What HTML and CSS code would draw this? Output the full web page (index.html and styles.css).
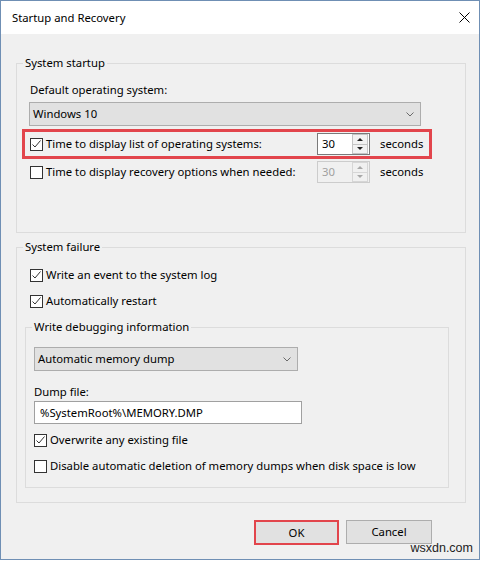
FILE: index.html
```html
<!DOCTYPE html>
<html>
<head>
<meta charset="utf-8">
<title>Startup and Recovery</title>
<link rel="stylesheet" href="styles.css">
</head>
<body>
<div class="window">
  <div class="titlebar">
    <span class="title">Startup and Recovery</span>
    <svg class="close" width="11" height="11" viewBox="0 0 11 11"><path d="M0.5 0.5L10.5 10.5M10.5 0.5L0.5 10.5" stroke="#000" stroke-width="1" fill="none"/></svg>
  </div>
  <div class="content">
    <fieldset class="group g1">
      <legend>System startup</legend>
      <div class="label">Default operating system:</div>
      <div class="select sel-os">
        <span>Windows 10</span>
        <svg width="8" height="5" viewBox="0 0 8 5"><path d="M0.5 0.5L4 4L7.5 0.5" fill="none" stroke="#6a6a6a"/></svg>
      </div>
      <div class="row highlight">
        <span class="check"><svg width="11" height="11" viewBox="0 0 11 11"><path d="M1.5 5.5L4 8L9.5 1.5" fill="none" stroke="#333" stroke-width="1"/></svg></span>
        <span class="rowlabel">Time to display list of operating systems:</span>
        <div class="spin">
          <span class="val">30</span>
          <span class="arrows"><span class="arr up"></span><span class="arr down"></span></span>
        </div>
        <span class="unit">seconds</span>
      </div>
      <div class="row plain">
        <span class="check"></span>
        <span class="rowlabel">Time to display recovery options when needed:</span>
        <div class="spin disabled">
          <span class="val">30</span>
          <span class="arrows"><span class="arr up"></span><span class="arr down"></span></span>
        </div>
        <span class="unit">seconds</span>
      </div>
    </fieldset>

    <fieldset class="group g2">
      <legend>System failure</legend>
      <div class="cbrow first"><span class="check"><svg width="11" height="11" viewBox="0 0 11 11"><path d="M1.5 5.5L4 8L9.5 1.5" fill="none" stroke="#333" stroke-width="1"/></svg></span><span class="cblabel">Write an event to the system log</span></div>
      <div class="cbrow"><span class="check"><svg width="11" height="11" viewBox="0 0 11 11"><path d="M1.5 5.5L4 8L9.5 1.5" fill="none" stroke="#333" stroke-width="1"/></svg></span><span class="cblabel">Automatically restart</span></div>

      <fieldset class="group g3">
        <legend>Write debugging information</legend>
        <div class="select sel-dump">
          <span>Automatic memory dump</span>
          <svg width="8" height="5" viewBox="0 0 8 5"><path d="M0.5 0.5L4 4L7.5 0.5" fill="none" stroke="#6a6a6a"/></svg>
        </div>
        <div class="label dumplabel">Dump file:</div>
        <div class="textbox">%SystemRoot%\MEMORY.DMP</div>
        <div class="cbrow over"><span class="check"><svg width="11" height="11" viewBox="0 0 11 11"><path d="M1.5 5.5L4 8L9.5 1.5" fill="none" stroke="#333" stroke-width="1"/></svg></span><span class="cblabel">Overwrite any existing file</span></div>
        <div class="cbrow"><span class="check"></span><span class="cblabel">Disable automatic deletion of memory dumps when disk space is low</span></div>
      </fieldset>
    </fieldset>

    <div class="buttons">
      <div class="btn ok">OK</div>
      <div class="btn cancel">Cancel</div>
    </div>
  </div>
  <div class="watermark">wsxdn.com</div>
</div>
</body>
</html>
```

FILE: styles.css
```css
html, body {
  margin: 0;
  padding: 0;
  background: #ffffff;
}

.window {
  position: relative;
  box-sizing: border-box;
  width: 480px;
  height: 560px;
  border: 1px solid #6f8fb4;
  background: #f0f0f0;
  font-family: "Segoe UI", "Noto Sans", "Open Sans", sans-serif;
  font-size: 11.3px;
  line-height: 16px;
  color: #000;
}

.titlebar {
  height: 33px;
  background: #ffffff;
  display: flex;
  align-items: center;
  justify-content: space-between;
  padding: 0 9px 0 11px;
}

.title {
  font-size: 11.3px;
}

.close {
  display: block;
}

.content {
  padding: 21px 13px 0 15px;
}

.group {
  margin: 0;
  border: 1px solid #dcdcdc;
  min-width: 0;
}

.group legend {
  padding: 0 2px;
  margin-left: -7px;
  line-height: 16px;
}

.g1 {
  padding: 11px 13px 48px 13px;
}

.g2 {
  margin-top: 6px;
  padding: 12px 16px 14px 13px;
}

.g3 {
  margin: 10px 0 0 -5px;
  padding: 12px 8px 13px 8px;
}

.g3 legend {
  margin-left: -2px;
}

.label {
  height: 16px;
}

.select {
  box-sizing: border-box;
  height: 24px;
  background: #e1e1e1;
  border: 1px solid #adadad;
  display: flex;
  align-items: center;
  justify-content: space-between;
  padding: 0 6px 0 3px;
}

.select svg {
  display: block;
}

.sel-os {
  width: 392px;
  margin: 4px 0 0 -1px;
}

.sel-dump {
  width: 264px;
}

.row {
  display: flex;
  align-items: center;
  box-sizing: border-box;
}

.highlight {
  width: 410px;
  height: 30px;
  margin: 3px 0 0 -8px;
  padding-left: 5px;
  border: 3px solid #e2454c;
}

.plain {
  height: 24px;
  margin-top: 1px;
}

.check {
  box-sizing: border-box;
  width: 13px;
  height: 13px;
  border: 1px solid #333333;
  background: #ffffff;
  flex: none;
  display: block;
}

.check svg {
  display: block;
}

.rowlabel {
  width: 271px;
  margin-left: 3px;
  flex: none;
}

.spin {
  box-sizing: border-box;
  width: 53px;
  height: 22px;
  border: 1px solid #7a7a7a;
  background: #ffffff;
  display: flex;
  align-items: center;
  justify-content: space-between;
  flex: none;
}

.spin .val {
  padding-left: 4px;
}

.arrows {
  display: flex;
  flex-direction: column;
  width: 16px;
  height: 20px;
  margin-right: 1px;
}

.arr {
  box-sizing: border-box;
  flex: 1;
  border: 1px solid #c4c4c4;
  background: #f2f2f2;
  display: flex;
  align-items: center;
  justify-content: center;
}

.arr.down {
  border-top: none;
}

.arr::after {
  content: "";
  width: 0;
  height: 0;
  border-left: 3px solid transparent;
  border-right: 3px solid transparent;
}

.arr.up::after {
  border-bottom: 3px solid #222;
}

.arr.down::after {
  border-top: 3px solid #222;
}

.spin.disabled {
  border-color: #cccccc;
  background: #f0f0f0;
  color: #a0a0a0;
}

.spin.disabled .arr {
  border-color: #d6d6d6;
  background: #f0f0f0;
}

.spin.disabled .arr.down {
  border-top: none;
}

.spin.disabled .arr.up::after {
  border-bottom-color: #a8a8a8;
}

.spin.disabled .arr.down::after {
  border-top-color: #a8a8a8;
}

.unit {
  margin-left: 10px;
}

.cbrow {
  display: flex;
  align-items: center;
  height: 16px;
  margin-top: 10px;
}

.cbrow.first {
  margin-top: 0;
}

.cbrow.over {
  margin-top: 8px;
}

.cblabel {
  margin-left: 3px;
  white-space: nowrap;
}

.dumplabel {
  margin-top: 13px;
}

.textbox {
  box-sizing: border-box;
  width: 268px;
  height: 23px;
  margin-top: 1px;
  background: #ffffff;
  border: 1px solid #a0a0a0;
  padding-left: 5px;
  display: flex;
  align-items: center;
}

.buttons {
  display: flex;
  justify-content: flex-end;
  gap: 7px;
  margin-top: 17px;
  padding-right: 34px;
}

.btn {
  box-sizing: border-box;
  display: flex;
  align-items: center;
  justify-content: center;
  background: #e1e1e1;
}

.btn.ok {
  width: 85px;
  height: 25px;
  border: 2px solid #e2454c;
}

.btn.cancel {
  width: 86px;
  height: 24px;
  border: 1px solid #adadad;
}

.watermark {
  position: absolute;
  right: 6px;
  bottom: 4px;
  font-family: "Liberation Sans", Arial, sans-serif;
  font-size: 12.5px;
  line-height: 14px;
  color: #222;
}
```
